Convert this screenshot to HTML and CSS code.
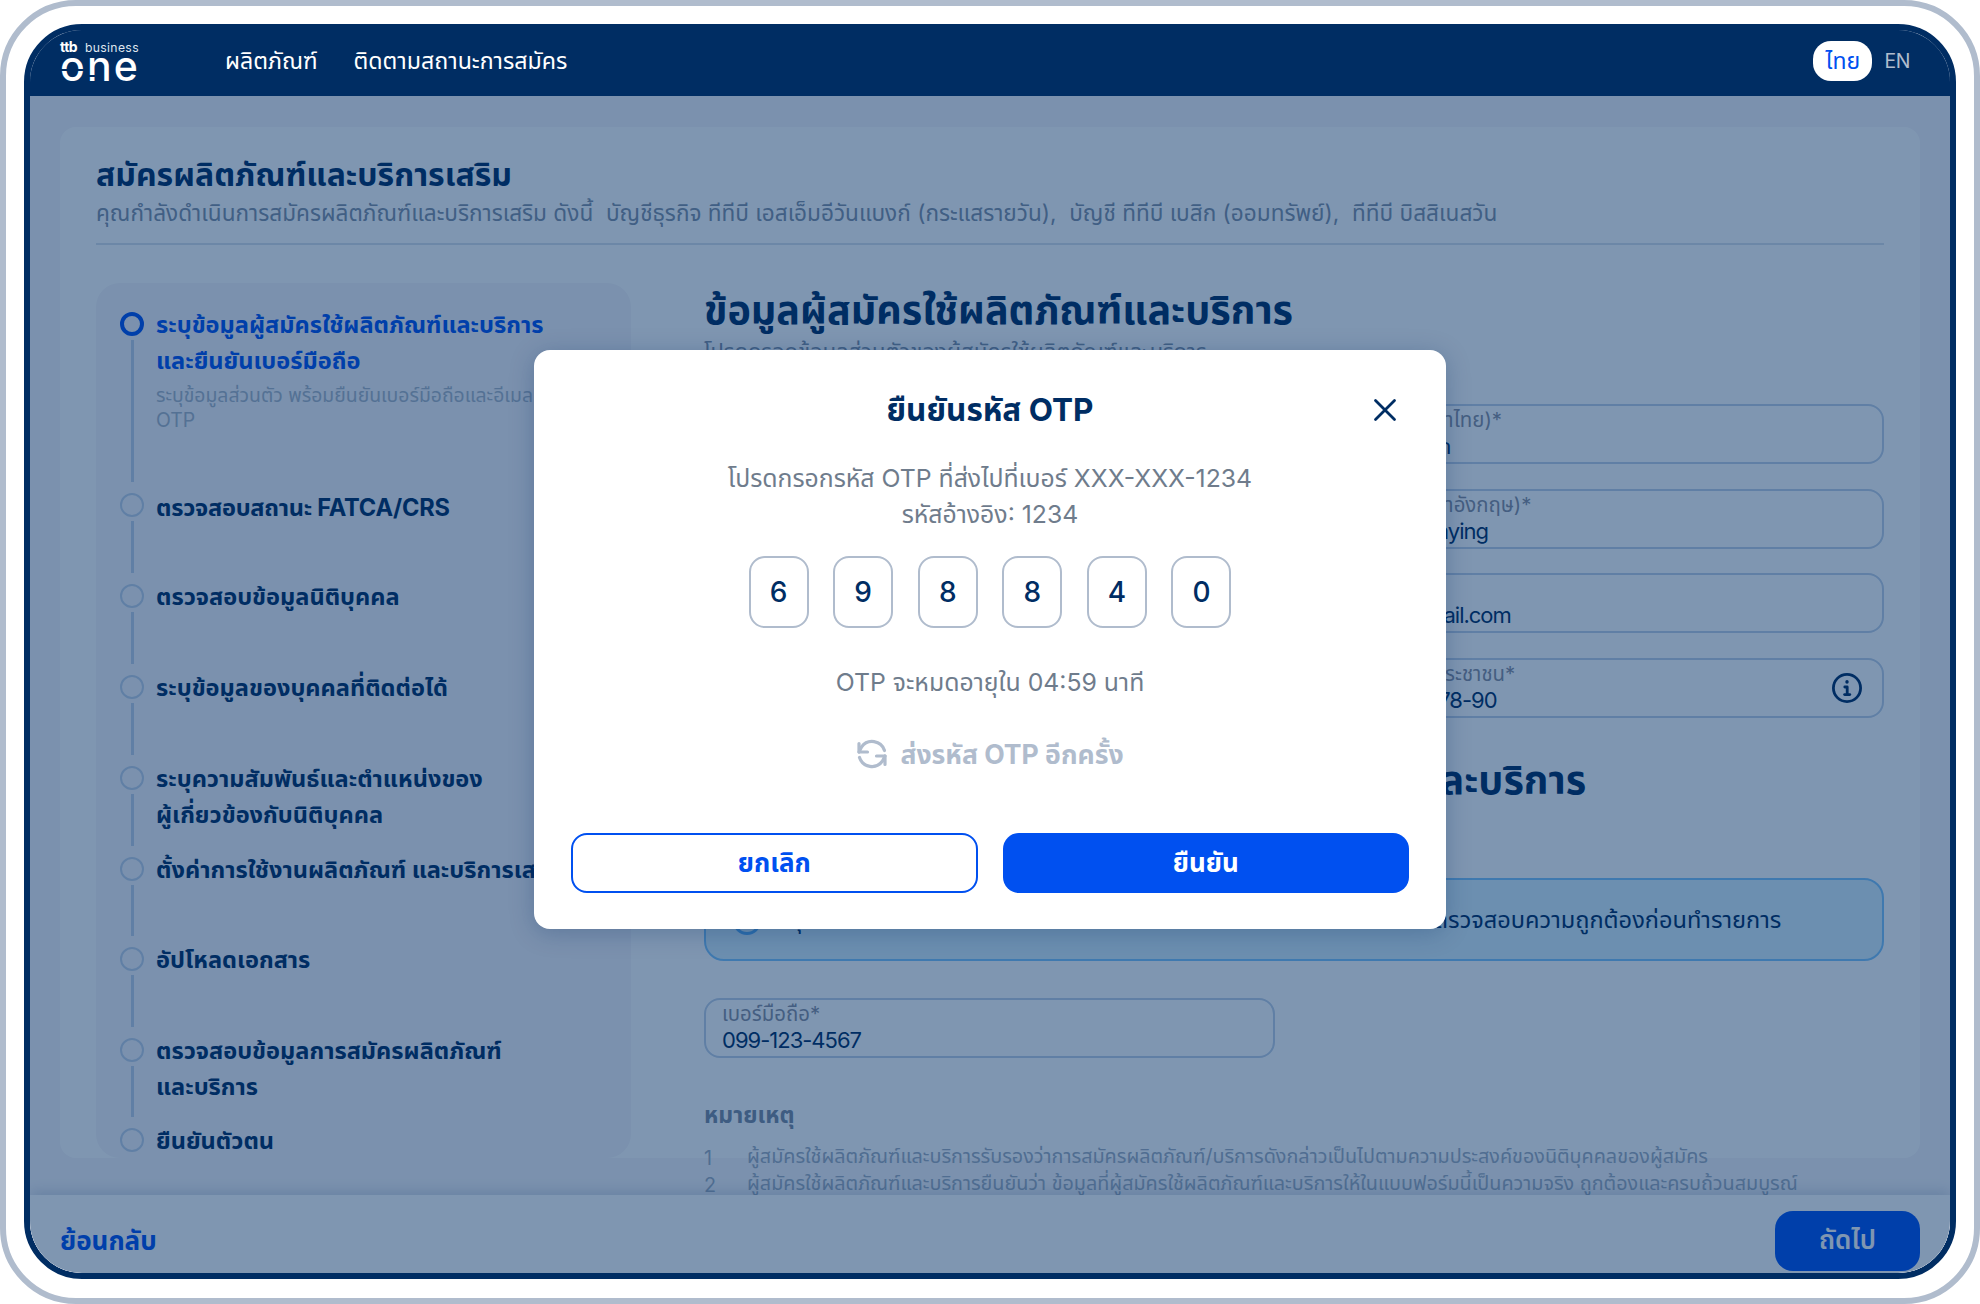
FILE: index.html
```html
<!DOCTYPE html>
<html lang="th">
<head>
    <meta charset="UTF-8">
    <meta name="viewport" content="width=device-width, initial-scale=1.0">
    <title>ttb business one</title>
    <link rel="stylesheet" href="styles.css">
</head>
<body>
    <div class="device">
        <div class="screen">
            <header class="topbar">
                <div class="logo">
                    <div class="logo-small"><b>ttb</b> business</div>
                    <div class="logo-one">one</div>
                </div>
                <nav class="topnav">
                    <a href="#">ผลิตภัณฑ์</a>
                    <a href="#">ติดตามสถานะการสมัคร</a>
                </nav>
                <div class="lang">
                    <span class="lang-active">ไทย</span>
                    <span class="lang-other">EN</span>
                </div>
            </header>

            <main class="page">
                <div class="page-scroll">
                    <section class="card">
                        <h1 class="card-title">สมัครผลิตภัณฑ์และบริการเสริม</h1>
                        <p class="card-sub">คุณกำลังดำเนินการสมัครผลิตภัณฑ์และบริการเสริม ดังนี้&nbsp; บัญชีธุรกิจ ทีทีบี เอสเอ็มอีวันแบงก์ (กระแสรายวัน),&nbsp; บัญชี ทีทีบี เบสิก (ออมทรัพย์),&nbsp; ทีทีบี บิสสิเนสวัน</p>
                        <div class="card-body">
                            <aside class="steps">
                                <div class="step step-current">
                                    <div class="step-rail"><span class="dot"></span><span class="rail"></span></div>
                                    <div class="step-text">
                                        <div class="step-name">ระบุข้อมูลผู้สมัครใช้ผลิตภัณฑ์และบริการ<br>และยืนยันเบอร์มือถือ</div>
                                        <div class="step-desc">ระบุข้อมูลส่วนตัว พร้อมยืนยันเบอร์มือถือและอีเมล<br>OTP</div>
                                    </div>
                                </div>
                                <div class="step">
                                    <div class="step-rail"><span class="dot"></span><span class="rail"></span></div>
                                    <div class="step-name step-name-latin">ตรวจสอบสถานะ FATCA/CRS</div>
                                </div>
                                <div class="step">
                                    <div class="step-rail"><span class="dot"></span><span class="rail"></span></div>
                                    <div class="step-name">ตรวจสอบข้อมูลนิติบุคคล</div>
                                </div>
                                <div class="step">
                                    <div class="step-rail"><span class="dot"></span><span class="rail"></span></div>
                                    <div class="step-name">ระบุข้อมูลของบุคคลที่ติดต่อได้</div>
                                </div>
                                <div class="step">
                                    <div class="step-rail"><span class="dot"></span><span class="rail"></span></div>
                                    <div class="step-name">ระบุความสัมพันธ์และตำแหน่งของ<br>ผู้เกี่ยวข้องกับนิติบุคคล</div>
                                </div>
                                <div class="step">
                                    <div class="step-rail"><span class="dot"></span><span class="rail"></span></div>
                                    <div class="step-name">ตั้งค่าการใช้งานผลิตภัณฑ์ และบริการเสริม</div>
                                </div>
                                <div class="step">
                                    <div class="step-rail"><span class="dot"></span><span class="rail"></span></div>
                                    <div class="step-name">อัปโหลดเอกสาร</div>
                                </div>
                                <div class="step">
                                    <div class="step-rail"><span class="dot"></span><span class="rail"></span></div>
                                    <div class="step-name">ตรวจสอบข้อมูลการสมัครผลิตภัณฑ์<br>และบริการ</div>
                                </div>
                                <div class="step">
                                    <div class="step-rail"><span class="dot"></span></div>
                                    <div class="step-name">ยืนยันตัวตน</div>
                                </div>
                            </aside>

                            <div class="form">
                                <h2 class="form-title">ข้อมูลผู้สมัครใช้ผลิตภัณฑ์และบริการ</h2>
                                <p class="form-sub">โปรดกรอกข้อมูลส่วนตัวของผู้สมัครใช้ผลิตภัณฑ์และบริการ</p>
                                <div class="field-grid">
                                    <div class="field">
                                        <span class="field-label">ชื่อ (ภาษาไทย)*</span>
                                        <span class="field-value">สมหญิง</span>
                                    </div>
                                    <div class="field">
                                        <span class="field-label">นามสกุล&nbsp; (ภาษาไทย)*</span>
                                        <span class="field-value">สมหญิงใจดีมาก</span>
                                    </div>
                                    <div class="field">
                                        <span class="field-label">ชื่อ (ภาษาอังกฤษ)*</span>
                                        <span class="field-value">Somying</span>
                                    </div>
                                    <div class="field">
                                        <span class="field-label">นามสกุล&nbsp; (ภาษาอังกฤษ)*</span>
                                        <span class="field-value">Jaideen Somying</span>
                                    </div>
                                    <div class="field">
                                        <span class="field-label">ตำแหน่ง</span>
                                        <span class="field-value">กรรมการ</span>
                                    </div>
                                    <div class="field">
                                        <span class="field-label">อีเมล*</span>
                                        <span class="field-value">somyin@gmail.com</span>
                                    </div>
                                    <div class="field">
                                        <span class="field-label">วันเดือนปีเกิด*</span>
                                        <span class="field-value">01/01/2530</span>
                                    </div>
                                    <div class="field field-info">
                                        <span class="field-label">หมายเลขบัตรประชาชน*</span>
                                        <span class="field-value">12-3456-5678-90</span>
                                        <svg class="info-icon" viewBox="0 0 32 32" fill="none" stroke="#002d63" stroke-width="2.8" stroke-linecap="round" stroke-linejoin="round">
                                            <circle cx="16" cy="16" r="13.6"/>
                                            <path d="M13.8 15h2.4v7.4"/>
                                            <path d="M13.6 22.6h5.2"/>
                                            <path d="M16 9.8v.2" stroke-width="3.4"/>
                                        </svg>
                                    </div>
                                </div>
                                <h2 class="form-title form-title-second">ยืนยันเบอร์มือถือ เพื่อการสมัครใช้ผลิตภัณฑ์และบริการ</h2>
                                <div class="notice">
                                    <span class="notice-icon"></span>
                                    <span class="notice-text">กรุณาใช้เบอร์มือถือที่ลงทะเบียนไว้กับธนาคารเพื่อรับรหัส OTP ทันที และตรวจสอบความถูกต้องก่อนทำรายการ</span>
                                </div>
                                <div class="field field-phone">
                                    <span class="field-label">เบอร์มือถือ*</span>
                                    <span class="field-value">099-123-4567</span>
                                </div>
                                <h3 class="remark-title">หมายเหตุ</h3>
                                <ol class="remarks">
                                    <li><span>1</span>ผู้สมัครใช้ผลิตภัณฑ์และบริการรับรองว่าการสมัครผลิตภัณฑ์/บริการดังกล่าวเป็นไปตามความประสงค์ของนิติบุคคลของผู้สมัคร</li>
                                    <li><span>2</span>ผู้สมัครใช้ผลิตภัณฑ์และบริการยืนยันว่า ข้อมูลที่ผู้สมัครใช้ผลิตภัณฑ์และบริการให้ในแบบฟอร์มนี้เป็นความจริง ถูกต้องและครบถ้วนสมบูรณ์</li>
                                    <li><span>3</span>ผู้สมัครใช้ผลิตภัณฑ์และบริการยอมรับว่าธนาคารอาจติดต่อเพื่อขอข้อมูลเพิ่มเติม</li>
                                </ol>
                            </div>
                        </div>
                    </section>
                </div>
                <footer class="bottombar">
                    <a class="back-link" href="#">ย้อนกลับ</a>
                    <button class="next-btn" type="button">ถัดไป</button>
                </footer>
            </main>

            <!-- OTP dialog -->
            <div class="overlay">
                <div class="modal">
                    <div class="modal-head">
                        <h2 class="modal-title">ยืนยันรหัส OTP</h2>
                        <svg class="modal-close" viewBox="0 0 24 24" fill="none" stroke="#002d63" stroke-width="2.8" stroke-linecap="round">
                            <path d="M2.5 2.5l19 19M21.5 2.5l-19 19"/>
                        </svg>
                    </div>
                    <p class="modal-text">โปรดกรอกรหัส OTP ที่ส่งไปที่เบอร์ XXX-XXX-1234<br>รหัสอ้างอิง: 1234</p>
                    <div class="otp-row">
                        <span class="otp-cell">6</span>
                        <span class="otp-cell">9</span>
                        <span class="otp-cell">8</span>
                        <span class="otp-cell">8</span>
                        <span class="otp-cell">4</span>
                        <span class="otp-cell">0</span>
                    </div>
                    <p class="otp-expire">OTP จะหมดอายุใน 04:59 นาที</p>
                    <div class="otp-resend">
                        <svg class="resend-icon" viewBox="0 0 32 32" fill="none" stroke="#b0bccd" stroke-width="3.2" stroke-linecap="round" stroke-linejoin="round">
                            <path d="M28.5 12.5A13 13 0 0 0 5.5 9L3 14"/>
                            <path d="M3 5.5V14h8.5"/>
                            <path d="M3.5 19.5A13 13 0 0 0 26.5 23L29 18"/>
                            <path d="M29 26.5V18h-8.5"/>
                        </svg>
                        <span>ส่งรหัส OTP อีกครั้ง</span>
                    </div>
                    <div class="modal-actions">
                        <button class="btn btn-outline" type="button">ยกเลิก</button>
                        <button class="btn btn-primary" type="button">ยืนยัน</button>
                    </div>
                </div>
            </div>
        </div>
    </div>
</body>
</html>
```

FILE: styles.css
```css
/* tablet frame + dimmed application behind the OTP dialog */
* {
    box-sizing: border-box;
}

body {
    margin: 0;
    background-color: #fff;
    font-family: 'Inter', 'Noto Sans Thai', 'Noto Sans', sans-serif;
    color: #002d63;
}

h1, h2, h3, p, ol {
    margin: 0;
    padding: 0;
}

a {
    color: inherit;
    text-decoration: none;
}

.device {
    width: 1980px;
    height: 1304px;
    padding: 18px 18px 19px 18px;
    border: 6px solid #b0bccd;
    border-radius: 76px;
    background-color: #fff;
}

.screen {
    position: relative;
    display: flex;
    flex-direction: column;
    height: 100%;
    border: 6px solid #002d63;
    border-radius: 58px;
    overflow: hidden;
}

/* Top bar */
.topbar {
    position: relative;
    z-index: 3;
    display: flex;
    align-items: center;
    flex: 0 0 72px;
    height: 72px;
    margin-top: -6px;
    padding: 0 40px 0 30px;
    background-color: #002d63;
    color: #fff;
}

.logo {
    flex: 0 0 165px;
    padding-bottom: 4px;
}

.logo-small {
    width: 77px;
    font-size: 12.2px;
    line-height: 14px;
    letter-spacing: 0.35px;
    color: #dfe5ee;
    white-space: nowrap;
}

.logo-small b {
    margin-right: 4px;
    font-size: 14px;
    color: #fff;
    letter-spacing: -0.5px;
}

.logo-one {
    position: relative;
    width: 77px;
    font-size: 41px;
    line-height: 22px;
    font-weight: 500;
    letter-spacing: 2.2px;
}

/* breaks in the logo's letters */
.logo-one::before {
    content: "";
    position: absolute;
    top: 14px;
    left: 0;
    width: 25px;
    height: 2px;
    background-color: #002d63;
}

.logo-one::after {
    content: "";
    position: absolute;
    top: 20px;
    left: 28px;
    width: 7px;
    height: 2px;
    background-color: #002d63;
}

.topnav {
    display: flex;
    gap: 36px;
    margin-top: 3px;
    font-size: 23.2px;
}

.lang {
    display: flex;
    align-items: center;
    gap: 12px;
    margin-left: auto;
    margin-top: 2px;
}

.lang-active {
    width: 59px;
    height: 40px;
    border-radius: 18px;
    background-color: #fff;
    color: #0050f0;
    font-size: 23px;
    line-height: 40px;
    text-align: center;
}

.lang-other {
    font-size: 19.5px;
    letter-spacing: -0.4px;
    color: #b0bccd;
}

/* Dimmed page */
.page {
    display: flex;
    flex-direction: column;
    flex: 1;
    min-height: 0;
    background-color: #f6f5f8;
}

.page-scroll {
    flex: 1;
    min-height: 0;
    padding: 31px 30px 0 30px;
    overflow: hidden;
}

.card {
    height: 1031px;
    padding: 28px 36px 0 36px;
    border-radius: 16px;
    background-color: #fff;
}

.card-title {
    font-size: 32px;
    line-height: 40px;
    font-weight: 700;
}

.card-sub {
    margin-top: 2px;
    padding-bottom: 14px;
    border-bottom: 2px solid #d8e0ea;
    font-size: 22.6px;
    line-height: 32px;
    color: #8290a5;
    white-space: nowrap;
}

.card-body {
    display: flex;
    margin-top: 38px;
}

.steps {
    flex: 0 0 535px;
    height: 875px;
    padding: 29px 16px 0 24px;
    border-radius: 24px;
    background-color: #f6f5f8;
}

.step {
    display: flex;
    gap: 12px;
    min-height: 91px;
}

.step:nth-child(6),
.step:nth-child(8) {
    min-height: 90px;
}

.step-current {
    min-height: 181px;
}

.step-rail {
    display: flex;
    flex-direction: column;
    align-items: center;
    flex: 0 0 24px;
}

.dot {
    flex: 0 0 24px;
    width: 24px;
    border: 2px solid #c0d1e6;
    border-radius: 50%;
}

.rail {
    flex: 1;
    width: 3px;
    margin: 4px 0 11px 0;
    background-color: #c0d1e6;
}

.step-name {
    margin-top: -5px;
    font-size: 23.6px;
    line-height: 36px;
    font-weight: 700;
    white-space: nowrap;
}

.step-name-latin {
    margin-top: -3px;
    letter-spacing: -0.25px;
}

.step-current .dot {
    border: 4px solid #0050f0;
}

.step-current .step-name {
    color: #0050f0;
}

.step-desc {
    margin-top: 4px;
    font-size: 19.4px;
    line-height: 25px;
    color: #a9b5c5;
    white-space: nowrap;
}

/* Right form column */
.form {
    flex: 1;
    min-width: 0;
    padding: 3px 0 0 73px;
}

.form-title {
    font-size: 39.5px;
    line-height: 48px;
    font-weight: 700;
    white-space: nowrap;
}

.form-sub {
    margin-top: 2px;
    font-size: 22px;
    line-height: 30px;
    color: #8290a5;
}

.field-grid {
    display: grid;
    grid-template-columns: 1fr 1fr;
    gap: 24.6px 24px;
    margin-top: 38px;
}

.field {
    position: relative;
    display: flex;
    flex-direction: column;
    justify-content: center;
    height: 60px;
    padding: 0 16px;
    border: 2px solid #c0d1e6;
    border-radius: 16px;
}

.field-label {
    font-size: 20.4px;
    line-height: 24px;
    color: #8a8f9e;
    white-space: nowrap;
}

.field-value {
    font-size: 22px;
    line-height: 28px;
    letter-spacing: -1px;
    color: #002d63;
    white-space: nowrap;
}

.info-icon {
    position: absolute;
    top: 12px;
    right: 19px;
    width: 32px;
    height: 32px;
}

.form-title-second {
    margin-top: 38px;
}

.notice {
    display: flex;
    align-items: center;
    gap: 16px;
    height: 83px;
    margin-top: 74px;
    padding: 4px 27px 0 27px;
    border: 2px solid #7fc4fa;
    border-radius: 20px;
    background-color: #d8f0fc;
    font-size: 23.6px;
    white-space: nowrap;
}

.notice-icon {
    flex: 0 0 28px;
    height: 28px;
    border: 3px solid #5aaef5;
    border-radius: 50%;
}

.field-phone {
    width: 571px;
    margin-top: 37px;
}

.remark-title {
    margin-top: 41px;
    font-size: 23px;
    line-height: 32px;
    font-weight: 700;
    color: #7d8ba0;
}

.remarks {
    margin-top: 13px;
    list-style: none;
    font-size: 19.8px;
    line-height: 25px;
    color: #a0adbe;
    white-space: nowrap;
}

.remarks span {
    display: inline-block;
    width: 43px;
    vertical-align: -2px;
}

/* Bottom bar */
.bottombar {
    position: relative;
    display: flex;
    align-items: flex-start;
    justify-content: space-between;
    flex: 0 0 78px;
    padding: 16px 30px 0 30px;
    background-color: #fff;
    box-shadow: 0 -4px 12px rgba(0, 45, 99, 0.14);
}

.back-link {
    margin-top: 13px;
    font-size: 26px;
    line-height: 34px;
    font-weight: 700;
    color: #0050f0;
}

.next-btn {
    width: 145px;
    height: 60px;
    border: none;
    border-radius: 18px;
    background-color: #0050f0;
    color: #fff;
    font-family: inherit;
    font-size: 26px;
    font-weight: 600;
}

/* OTP dialog */
.overlay {
    position: absolute;
    top: 0;
    right: 0;
    bottom: 0;
    left: 0;
    z-index: 2;
    display: flex;
    align-items: center;
    justify-content: center;
    padding-bottom: 24px;
    background-color: rgba(0, 45, 99, 0.5);
}

.modal {
    width: 912px;
    height: 579px;
    padding: 36px 37px 0 37px;
    border-radius: 16px;
    background-color: #fff;
    box-shadow: 0 4px 24px rgba(0, 45, 99, 0.25);
    text-align: center;
}

.modal-head {
    position: relative;
}

.modal-title {
    font-size: 31.5px;
    line-height: 48px;
    font-weight: 700;
}

.modal-close {
    position: absolute;
    top: 12px;
    right: 12px;
    width: 24px;
    height: 24px;
}

.modal-text {
    margin-top: 26px;
    font-size: 24.8px;
    line-height: 36px;
    color: #6f7c8c;
}

.otp-row {
    display: flex;
    justify-content: center;
    gap: 24.6px;
    margin-top: 24px;
}

.otp-cell {
    width: 60px;
    height: 72px;
    border: 2px solid #b0bccd;
    border-radius: 16px;
    font-size: 28px;
    font-weight: 500;
    line-height: 68px;
}

.otp-expire {
    margin-top: 36px;
    font-size: 24.8px;
    line-height: 36px;
    color: #6f7c8c;
}

.otp-resend {
    display: flex;
    align-items: center;
    justify-content: center;
    gap: 12px;
    margin-top: 36px;
    font-size: 26.6px;
    line-height: 36px;
    font-weight: 700;
    color: #b0bccd;
}

.resend-icon {
    width: 32px;
    height: 32px;
}

.modal-actions {
    display: flex;
    gap: 25px;
    margin-top: 61px;
}

.btn {
    flex: 0 0 406.5px;
    height: 60px;
    padding: 2px 0 0 0;
    border-radius: 16px;
    font-family: inherit;
    font-size: 26px;
    font-weight: 700;
}

.btn-outline {
    border: 2px solid #0050f0;
    background-color: #fff;
    color: #0050f0;
}

.btn-primary {
    border: none;
    background-color: #0050f0;
    color: #fff;
}
```
